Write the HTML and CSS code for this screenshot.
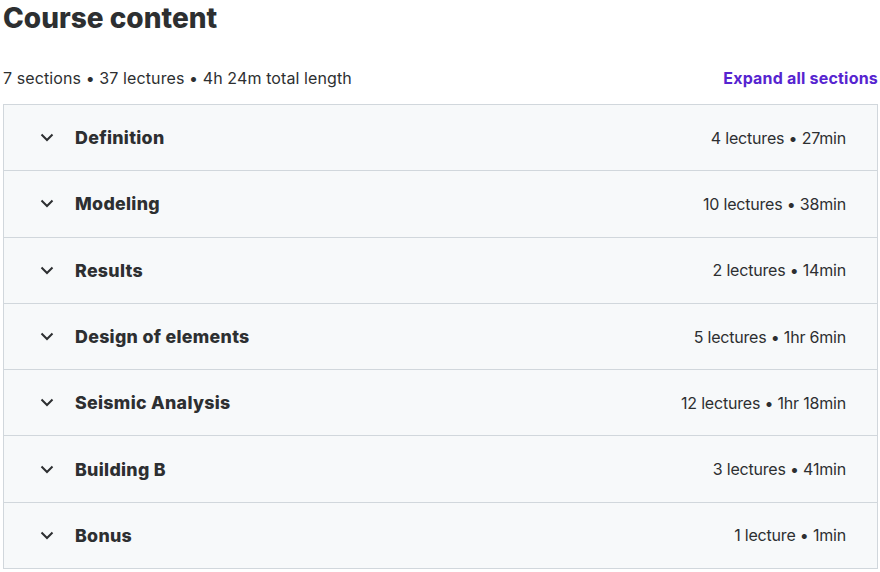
FILE: index.html
```html
<!DOCTYPE html>
<html>
<head>
<meta charset="utf-8">
<link rel="stylesheet" href="styles.css">
</head>
<body>
<div class="page">
  <h2 class="title">Course content</h2>
  <div class="summary">
    <span class="stats">7 sections • 37 lectures • 4h 24m total length</span>
    <button class="expand">Expand all sections</button>
  </div>
  <div class="sections">
    <div class="section"><span class="chev"><svg viewBox="0 0 14 9" width="14" height="9"><path d="M1.5 1.5 L7 7 L12.5 1.5" fill="none" stroke="#2d2f31" stroke-width="2"/></svg></span><span class="name">Definition</span><span class="meta">4 lectures • 27min</span></div>
    <div class="section"><span class="chev"><svg viewBox="0 0 14 9" width="14" height="9"><path d="M1.5 1.5 L7 7 L12.5 1.5" fill="none" stroke="#2d2f31" stroke-width="2"/></svg></span><span class="name">Modeling</span><span class="meta">10 lectures • 38min</span></div>
    <div class="section"><span class="chev"><svg viewBox="0 0 14 9" width="14" height="9"><path d="M1.5 1.5 L7 7 L12.5 1.5" fill="none" stroke="#2d2f31" stroke-width="2"/></svg></span><span class="name">Results</span><span class="meta">2 lectures • 14min</span></div>
    <div class="section"><span class="chev"><svg viewBox="0 0 14 9" width="14" height="9"><path d="M1.5 1.5 L7 7 L12.5 1.5" fill="none" stroke="#2d2f31" stroke-width="2"/></svg></span><span class="name">Design of elements</span><span class="meta">5 lectures • 1hr 6min</span></div>
    <div class="section"><span class="chev"><svg viewBox="0 0 14 9" width="14" height="9"><path d="M1.5 1.5 L7 7 L12.5 1.5" fill="none" stroke="#2d2f31" stroke-width="2"/></svg></span><span class="name">Seismic Analysis</span><span class="meta">12 lectures • 1hr 18min</span></div>
    <div class="section"><span class="chev"><svg viewBox="0 0 14 9" width="14" height="9"><path d="M1.5 1.5 L7 7 L12.5 1.5" fill="none" stroke="#2d2f31" stroke-width="2"/></svg></span><span class="name">Building B</span><span class="meta">3 lectures • 41min</span></div>
    <div class="section"><span class="chev"><svg viewBox="0 0 14 9" width="14" height="9"><path d="M1.5 1.5 L7 7 L12.5 1.5" fill="none" stroke="#2d2f31" stroke-width="2"/></svg></span><span class="name">Bonus</span><span class="meta">1 lecture • 1min</span></div>
  </div>
</div>
</body>
</html>
```
FILE: styles.css
```css
* { box-sizing: border-box; }
html, body { margin: 0; padding: 0; background: #fff; }
body { font-family: Inter, "Liberation Sans", sans-serif; color: #2d2f31; }
.page { padding: 0 2px 0 3px; width: 880px; }
.title { margin: 0; font-size: 28px; font-weight: 800; line-height: 36px; height: 36px; letter-spacing: 0; }
.summary { display: flex; justify-content: space-between; align-items: center; margin-top: 30px; height: 24px; font-size: 16px; letter-spacing: 0.1px; }
.stats { color: #2d2f31; }
.expand { border: 0; background: none; padding: 0; font-family: inherit; font-size: 16px; font-weight: 700; color: #5624d0; cursor: pointer; letter-spacing: 0.2px; }
.sections { margin-top: 14px; border: 1px solid #d1d7dc; }
.section { display: flex; align-items: center; height: 66.3px; padding: 0 31px 0 36px; background: #f7f9fa; border-top: 1px solid #d1d7dc; }
.section:first-child { border-top: 0; height: 65.3px; }
.chev { display: flex; width: 14px; margin-right: 21px; }
.name { flex: 1; font-weight: 800; font-size: 17.8px; letter-spacing: 0.3px; }
.meta { font-size: 16px; letter-spacing: -0.2px; }
```
